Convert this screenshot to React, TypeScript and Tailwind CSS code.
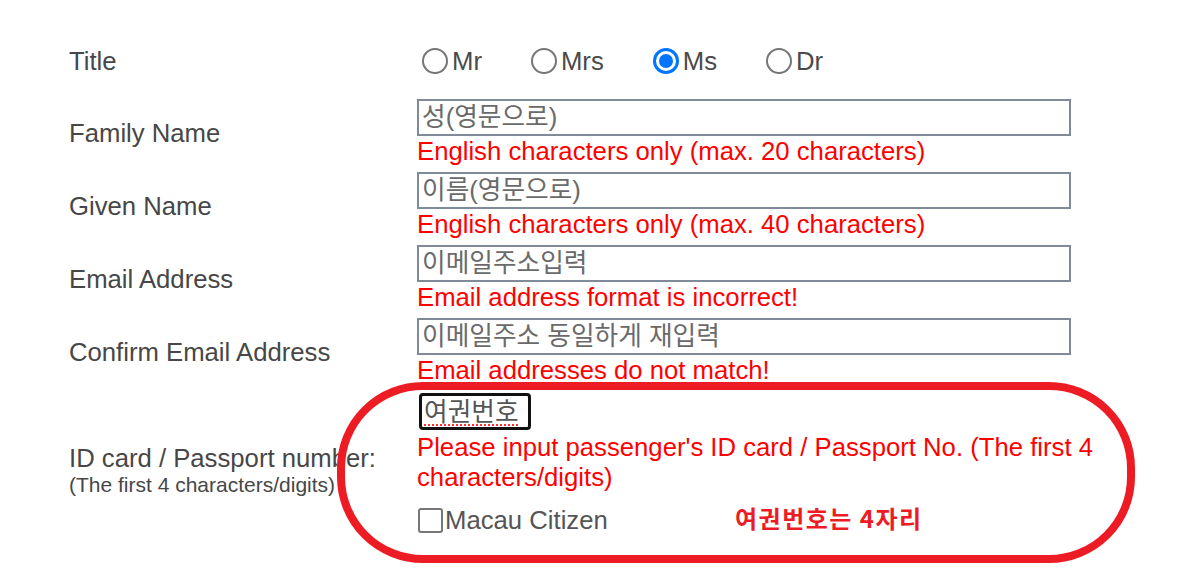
import React from 'react';

const FONT = "font-['Liberation_Sans','Noto_Sans_CJK_KR',sans-serif]";

const titles = ['Mr', 'Mrs', 'Ms', 'Dr'];

function Radio({ label, checked }: { label: string; checked?: boolean }) {
  return (
    <div className="flex items-center">
      {checked ? (
        <span className="ml-[5px] flex h-[26px] w-[26px] items-center justify-center rounded-full bg-[#0075ff]">
          <span className="h-[20px] w-[20px] rounded-full border-[3px] border-white bg-[#0075ff]" />
        </span>
      ) : (
        <span className="ml-[5px] h-[26px] w-[26px] rounded-full border-2 border-[#767676] bg-white" />
      )}
      <span className="ml-[4px] text-[#4a4a4a]">{label}</span>
    </div>
  );
}

function TextRow({ label, placeholder, error }: { label: string; placeholder: string; error: string }) {
  return (
    <div className="mb-[6px] flex">
      <div className="flex w-[348px] items-center text-[#474747]">{label}</div>
      <div className="flex flex-col">
        <input
          readOnly
          placeholder={placeholder}
          className="h-[37px] w-[654px] border-2 border-[#7f8b98] bg-white px-[3px] text-[25.7px] outline-none placeholder:text-[#6a6a6a]"
        />
        <div className="leading-[30px] text-[#ff0000]">{error}</div>
      </div>
    </div>
  );
}

export default function App() {
  return (
    <div className={`relative h-[580px] w-[1196px] overflow-hidden bg-white text-[25.7px] leading-[30px] ${FONT}`}>
      <div className="pl-[69px] pt-[39px]">
        {/* Title */}
        <div className="mb-[16px] flex h-[44px] items-center">
          <div className="w-[348px] text-[#474747]">Title</div>
          <div className="flex items-center gap-[44px]">
            {titles.map((t) => (
              <Radio key={t} label={t} checked={t === 'Ms'} />
            ))}
          </div>
        </div>

        <TextRow label="Family Name" placeholder="성(영문으로)" error="English characters only (max. 20 characters)" />
        <TextRow label="Given Name" placeholder="이름(영문으로)" error="English characters only (max. 40 characters)" />
        <TextRow label="Email Address" placeholder="이메일주소입력" error="Email address format is incorrect!" />
        <TextRow label="Confirm Email Address" placeholder="이메일주소 동일하게 재입력" error="Email addresses do not match!" />

        {/* Passport */}
        <div className="flex">
          <div className="w-[348px] pt-[52px] text-[#474747]">
            <div>ID card / Passport number:</div>
            <div className="text-[21px] leading-[24px]">(The first 4 characters/digits)</div>
          </div>
          <div className="flex flex-col">
            <div className="mt-[2px] ml-[2px] flex h-[37px] w-[112px] items-center rounded-[4px] border-[3px] border-[#111] px-[2px] text-[#555]">
              <span className="underline decoration-[#ff3030] decoration-dotted decoration-2 underline-offset-[4px]">여권번호</span>
            </div>
            <div className="mt-[2px] w-[690px] leading-[30px] text-[#ff0000]">
              Please input passenger's ID card / Passport No. (The first 4 characters/digits)
            </div>
            <div className="mt-[13px] flex items-center">
              <span className="ml-[1px] h-[25px] w-[25px] rounded-[3px] border-2 border-[#767676] bg-white" />
              <span className="ml-[2px] text-[#555]">Macau Citizen</span>
            </div>
          </div>
        </div>
      </div>

      {/* annotation */}
      <div className="pointer-events-none absolute left-[337px] top-[382px] h-[181px] w-[798px] rounded-[86px] border-[8px] border-[#ed1c24]" />
      <div className="absolute left-[735px] top-[503px] font-['Noto_Sans_CJK_KR',sans-serif] text-[24px] font-bold leading-[30px] tracking-[1.5px] text-[#ed1c24]">
        여권번호는 4자리
      </div>
    </div>
  );
}
